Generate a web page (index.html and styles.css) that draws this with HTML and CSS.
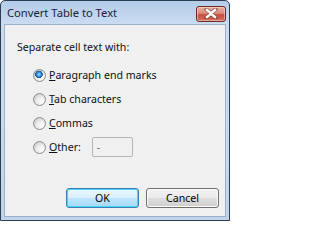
FILE: index.html
```html
<!DOCTYPE html>
<html>
<head>
<meta charset="utf-8">
<link rel="stylesheet" href="styles.css">
</head>
<body>
<div class="window">
  <div class="titlebar">
    <span class="title">Convert Table to Text</span>
    <button class="close" aria-label="Close">
      <svg width="14" height="11" viewBox="0 0 14 11">
        <path d="M2.5 1.5 L7 5 L11.5 1.5 M2.5 9.5 L7 6 L11.5 9.5" stroke="#5a2a26" stroke-width="4" fill="none" stroke-linecap="square" opacity="0.55"/>
        <path d="M3 2 L7 5.3 L11 2 M3 9 L7 5.7 L11 9" stroke="#ffffff" stroke-width="2.4" fill="none" stroke-linecap="square"/>
      </svg>
    </button>
  </div>
  <div class="client">
    <div class="group-label">Separate cell text with:</div>
    <div class="options">
      <label class="option"><input type="radio" name="sep" class="radio" checked><span><u>P</u>aragraph end marks</span></label>
      <label class="option"><input type="radio" name="sep" class="radio"><span><u>T</u>ab characters</span></label>
      <label class="option"><input type="radio" name="sep" class="radio"><span><u>C</u>ommas</span></label>
      <label class="option"><input type="radio" name="sep" class="radio"><span><u>O</u>ther:</span><input class="other" type="text" value="-" disabled></label>
    </div>
    <div class="actions">
      <button class="btn btn-default">OK</button>
      <button class="btn">Cancel</button>
    </div>
  </div>
</div>
</body>
</html>
```

FILE: styles.css
```css
html, body {
  margin: 0;
  padding: 0;
  background: #ffffff;
}

body {
  font-family: "Noto Sans", "Open Sans", sans-serif;
  font-size: 10.6px;
  color: #000000;
}

.window {
  box-sizing: border-box;
  width: 230px;
  height: 221px;
  border: 1px solid #2d3e52;
  border-radius: 5px 5px 0 0;
  background: linear-gradient(to bottom, #b4cce8 0px, #c0d5ee 14px, #cbdcf1 23px, #c7dbef 60%, #bfd3eb 100%);
  padding: 0 3px 3px 3px;
  display: flex;
  flex-direction: column;
}

.titlebar {
  height: 23px;
  display: flex;
  align-items: center;
  justify-content: space-between;
  padding-left: 3px;
  flex: none;
}

.title {
  color: #16243a;
  font-size: 11.2px;
  line-height: 16px;
  margin-top: 1px;
}

.close {
  box-sizing: border-box;
  width: 30px;
  height: 16px;
  margin-top: 2px;
  padding: 0;
  border: 1px solid #6b2a24;
  border-radius: 3px;
  background: linear-gradient(to bottom, #eab0a2 0%, #dc8b7b 45%, #c6503e 55%, #d0705c 100%);
  box-shadow: inset 0 0 0 1px rgba(255, 220, 210, 0.55);
  display: flex;
  align-items: center;
  justify-content: center;
}

.client {
  flex: 1;
  background: #f0f0f0;
  border: 1px solid #9db1c8;
  padding: 14px 6px 8px 12px;
  display: flex;
  flex-direction: column;
}

.group-label {
  line-height: 16px;
  color: #0a1020;
}

.options {
  margin-top: 8px;
  padding-left: 16px;
  display: flex;
  flex-direction: column;
}

.option {
  height: 24px;
  display: flex;
  align-items: center;
  color: #0a1020;
}

.radio {
  appearance: none;
  -webkit-appearance: none;
  box-sizing: border-box;
  width: 13px;
  height: 13px;
  margin: 0 3px 0 0;
  border: 1px solid #8c8c8c;
  border-radius: 50%;
  background: radial-gradient(circle at 70% 72%, #ffffff 0%, #ebebeb 45%, #cbcbcb 85%, #f4f4f4 100%);
  flex: none;
}

.radio:checked {
  background:
    radial-gradient(circle at 45% 40%, #9fd8ff 0px, #3c9ae2 2px, #1760b0 3.2px, #2a4f7c 3.6px, transparent 4px),
    radial-gradient(circle at 70% 72%, #ffffff 0%, #ebebeb 45%, #cbcbcb 85%, #f4f4f4 100%);
}

.other {
  box-sizing: border-box;
  width: 41px;
  height: 20px;
  margin-left: 11px;
  border: 1px solid #b5b5b5;
  border-radius: 2px;
  background: #f0f0f0;
  color: #6d6d6d;
  font-family: inherit;
  font-size: 10.6px;
  padding: 0 4px;
}

.actions {
  margin-top: auto;
  display: flex;
  justify-content: flex-end;
  gap: 7px;
}

.btn {
  box-sizing: border-box;
  width: 73px;
  height: 20px;
  padding: 0;
  font-family: inherit;
  font-size: 10.6px;
  color: #000000;
  border: 1px solid #707070;
  border-radius: 3px;
  background: linear-gradient(to bottom, #f2f2f2 0%, #ebebeb 48%, #dddddd 52%, #cfcfcf 100%);
  box-shadow: inset 0 0 0 1px #fcfcfc;
}

.btn-default {
  border-color: #3c7fb1;
  background: linear-gradient(to bottom, #eaf6fd 0%, #d9f0fc 48%, #bee6fd 52%, #a7d9f5 100%);
  box-shadow: inset 0 0 0 1px #48d3f8;
}
```
